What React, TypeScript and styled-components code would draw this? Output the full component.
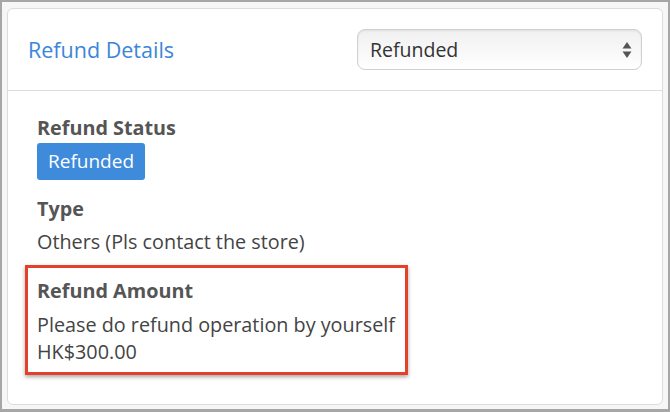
import React from "react";
import styled, { createGlobalStyle } from "styled-components";

const Global = createGlobalStyle`
  html, body { margin: 0; padding: 0; }
  body {
    width: 670px;
    height: 412px;
    font-family: "Open Sans", "Liberation Sans", sans-serif;
    background: #f6f6f6;
    overflow: hidden;
  }
`;

const Frame = styled.div`
  box-sizing: border-box;
  width: 670px;
  height: 412px;
  border-style: solid;
  border-color: #a6a6a6;
  border-width: 2px 2px 3px 2px;
  background: #f6f6f6;
  padding: 6px 5px 4px 5px;
`;

const Card = styled.section`
  box-sizing: border-box;
  height: 100%;
  background: #fff;
  border: 1px solid #dcdcdc;
  border-radius: 6px;
  display: flex;
  flex-direction: column;
`;

const Header = styled.header`
  height: 82px;
  box-sizing: border-box;
  display: flex;
  align-items: center;
  justify-content: space-between;
  padding: 0 20px 0 20px;
  border-bottom: 1px solid #dedede;
`;

const Title = styled.h2`
  margin: 0;
  font-size: 21.5px;
  font-weight: 400;
  color: #3b86d8;
`;

const Select = styled.div`
  box-sizing: border-box;
  width: 285px;
  height: 41px;
  border: 1px solid #d0d0d0;
  border-radius: 8px;
  background: linear-gradient(#f0f0f0, #ffffff);
  box-shadow: inset 0 1px 2px rgba(0, 0, 0, 0.08);
  display: flex;
  align-items: center;
  justify-content: space-between;
  padding: 0 9px 0 12px;
  font-size: 19.5px;
  color: #333;
`;

const Body = styled.div`
  padding: 24px 29px 0 29px;
  display: flex;
  flex-direction: column;
  align-items: flex-start;
`;

const Label = styled.div`
  font-size: 19.8px;
  font-weight: 700;
  color: #555;
  line-height: 26px;
`;

const Value = styled.div<{ $top?: number }>`
  font-size: 19.8px;
  color: #444;
  line-height: 27px;
  margin-top: ${(p) => p.$top ?? 0}px;
`;

const Badge = styled.span`
  display: inline-block;
  background: #3e8bdb;
  color: #fff;
  font-size: 19px;
  line-height: 37px;
  height: 37px;
  padding: 0 11px;
  border-radius: 3px;
  margin-top: 2px;
  margin-bottom: 16px;
`;

const Field = styled.div``;

const Highlight = styled.div`
  margin: 10px 0 0 -12px;
  box-sizing: border-box;
  width: 383px;
  border: 3px solid #e4412b;
  padding: 10px 9px 7px 9px;
  box-shadow: 0 2px 4px rgba(0, 0, 0, 0.35);
`;

const Arrows = () => (
  <svg width="10" height="18" viewBox="0 0 10 18">
    <path d="M5 1 L9.5 7.5 H0.5 Z" fill="#555" />
    <path d="M5 17 L9.5 10.5 H0.5 Z" fill="#555" />
  </svg>
);

export default function App() {
  return (
    <>
      <Global />
      <Frame>
        <Card>
          <Header>
            <Title>Refund Details</Title>
            <Select>
              <span>Refunded</span>
              <Arrows />
            </Select>
          </Header>
          <Body>
            <Label>Refund Status</Label>
            <Badge>Refunded</Badge>
            <Field>
              <Label>Type</Label>
              <Value $top={6}>Others (Pls contact the store)</Value>
            </Field>
            <Highlight>
              <Label>Refund Amount</Label>
              <Value $top={7}>Please do refund operation by yourself</Value>
              <Value>HK$300.00</Value>
            </Highlight>
          </Body>
        </Card>
      </Frame>
    </>
  );
}
